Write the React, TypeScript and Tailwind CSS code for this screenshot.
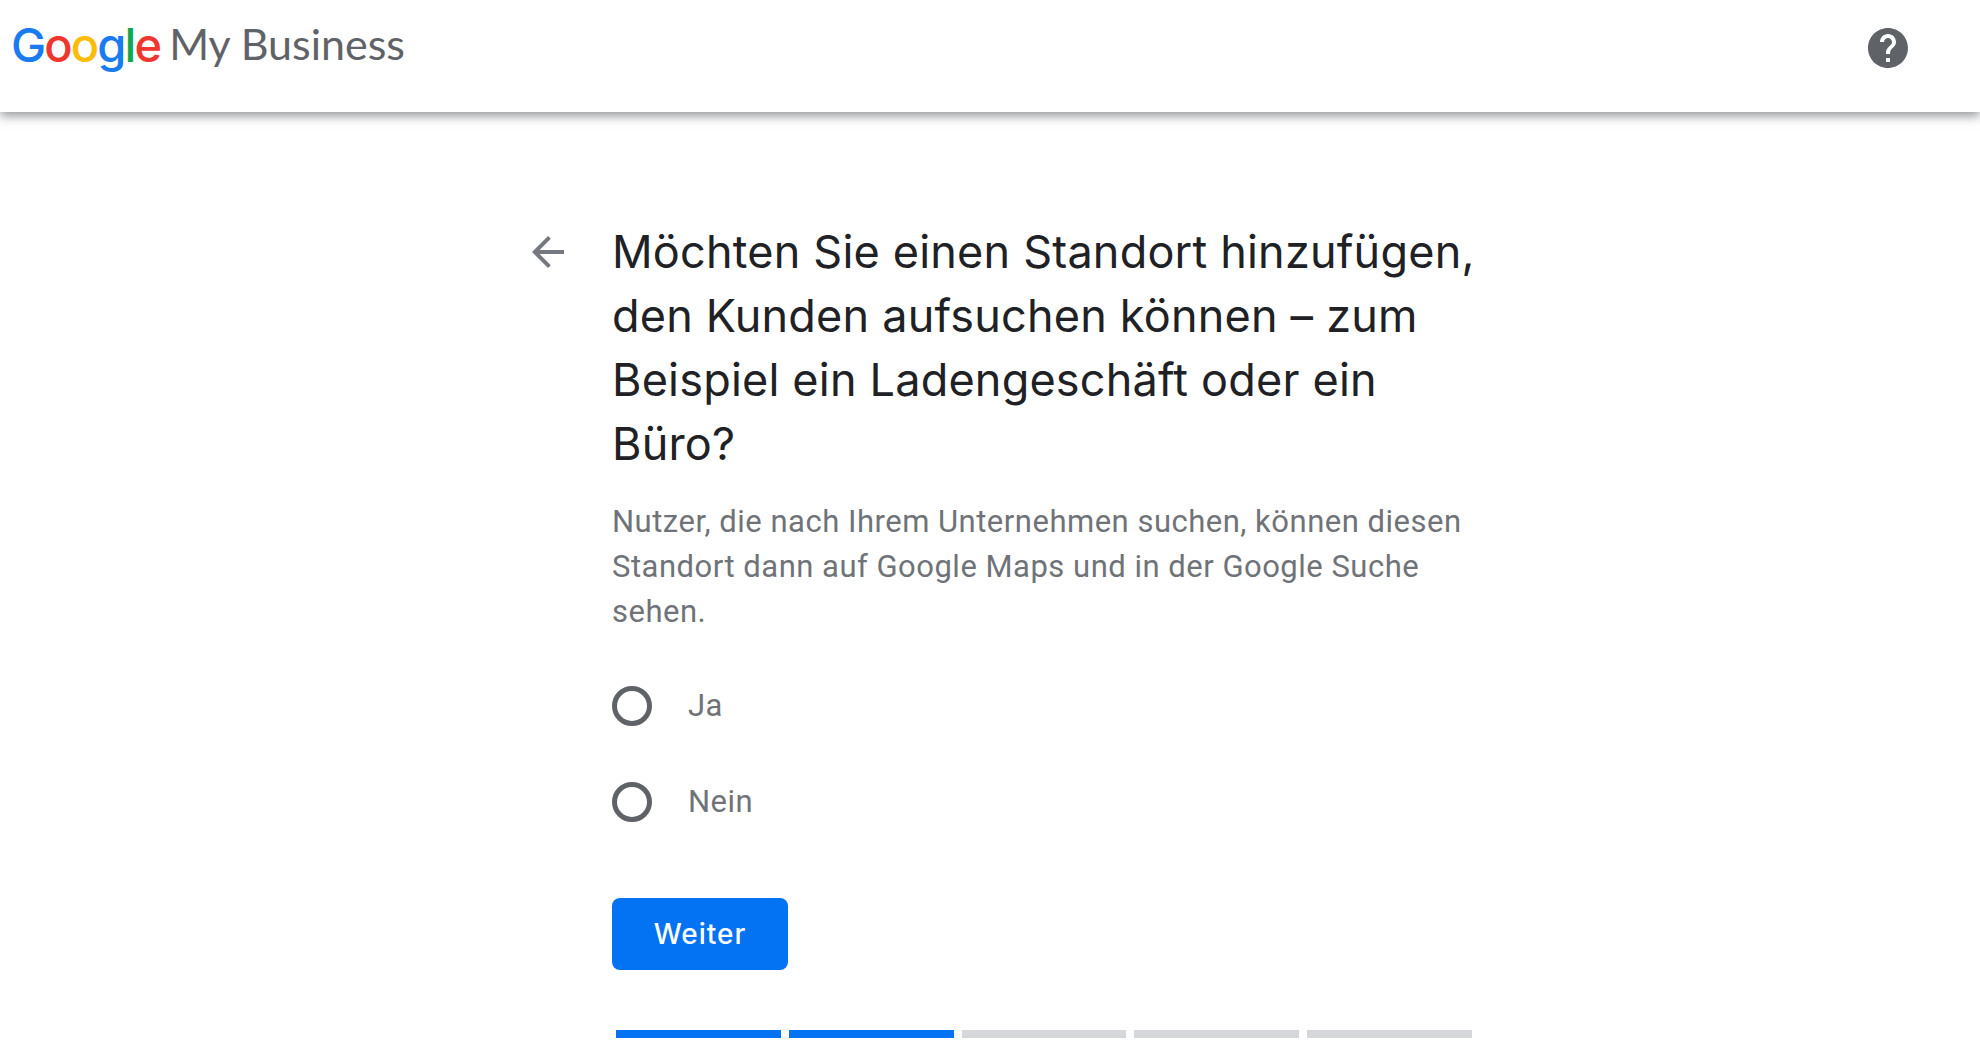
const steps = [true, true, false, false, false];

function Radio({ label }: { label: string }) {
  return (
    <label className="flex h-[96px] items-center">
      <span className="h-[40px] w-[40px] rounded-full border-[5px] border-[#5f6368]" />
      <span className="ml-[36px] text-[31px] tracking-[0.5px] text-[#6f7378]">{label}</span>
    </label>
  );
}

export default function App() {
  return (
    <div className="min-h-[1060px] overflow-hidden bg-white font-['Roboto',sans-serif]">
      <header className="flex h-[112px] items-start justify-between shadow-[0_4px_10px_rgba(60,64,67,0.55)]">
        <div className="mt-[15px] ml-[11px] flex items-baseline text-[43px] leading-[60px]">
          <span className="font-['Inter',sans-serif] text-[47px] font-medium tracking-[-1.9px]">
            <span className="text-[#1a7bf0]">G</span>
            <span className="text-[#f0372f]">o</span>
            <span className="text-[#fbbc04]">o</span>
            <span className="text-[#1a7bf0]">g</span>
            <span className="text-[#0fa84f]">l</span>
            <span className="text-[#f0372f]">e</span>
          </span>
          <span className="ml-[9px] -translate-y-[2px] font-['Lato',sans-serif] text-[#5f6368]">My Business</span>
        </div>
        <svg viewBox="2 2 20 20" className="mt-[28px] mr-[72px] h-[40px] w-[40px]">
          <path
            fill="#5f6368"
            d="M12 2C6.48 2 2 6.48 2 12s4.48 10 10 10 10-4.480 10-10S17.520 2 12 2zm1 17h-2v-2h2v2zm2.070-7.750l-.9.920C13.450 12.900 13 13.500 13 15h-2v-.5c0-1.100.45-2.100 1.170-2.830l1.240-1.260c.37-.36.59-.86.59-1.410 0-1.100-.9-2-2-2s-2 .9-2 2H8c0-2.210 1.790-4 4-4s4 1.790 4 4c0 .88-.36 1.680-.93 2.250z"
          />
        </svg>
      </header>

      <main className="ml-[524px] mt-[108px] flex w-[960px]">
        <div className="flex h-[64px] w-[88px] shrink-0 items-center">
          <svg viewBox="0 0 24 24" className="h-[48px] w-[48px]">
            <path fill="#75797f" d="M20 11H7.830l5.590-5.590L12 4l-8 8 8 8 1.410-1.410L7.830 13H20v-2z" />
          </svg>
        </div>
        <div className="w-[868px]">
          <h1 className="font-['Inter',sans-serif] text-[45px] leading-[64px] tracking-[0.2px] text-[#202124]">
            Möchten Sie einen Standort hinzufügen,
            <br />
            den Kunden aufsuchen können – zum
            <br />
            Beispiel ein Ladengeschäft oder ein
            <br />
            Büro?
          </h1>
          <p className="mt-[23px] text-[31px] leading-[45px] tracking-[0.5px] text-[#6f7378]">
            Nutzer, die nach Ihrem Unternehmen suchen, können diesen
            <br />
            Standort dann auf Google Maps und in der Google Suche
            <br />
            sehen.
          </p>
          <div className="mt-[24px] flex flex-col">
            <Radio label="Ja" />
            <Radio label="Nein" />
          </div>
          <button className="mt-[48px] h-[72px] w-[176px] rounded-[8px] bg-[#0373f3] font-['Inter',sans-serif] text-[28px] font-medium tracking-[1px] text-white">
            Weiter
          </button>
          <div className="mt-[60px] ml-[4px] flex w-[856px] gap-[8px]">
            {steps.map((done, i) => (
              <div key={i} className={done ? "h-[8px] flex-1 bg-[#0373f3]" : "h-[8px] flex-1 bg-[#d6d7db]"} />
            ))}
          </div>
        </div>
      </main>
    </div>
  );
}
